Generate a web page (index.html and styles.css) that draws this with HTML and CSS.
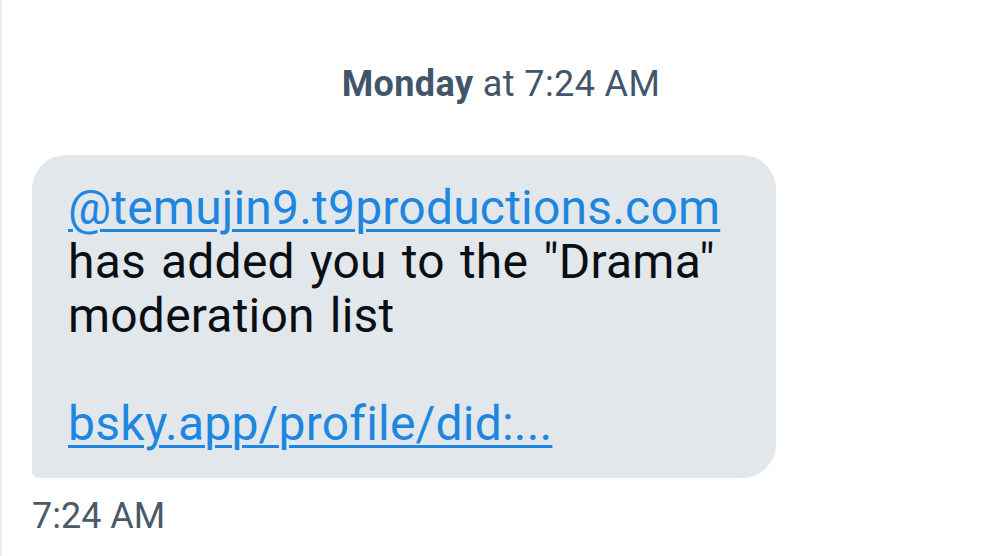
FILE: index.html
```html
<!DOCTYPE html>
<html>
<head>
<meta charset="utf-8">
<link rel="stylesheet" href="styles.css">
</head>
<body>
<div class="page">
  <div class="date"><span class="day">Monday</span> at 7:24 AM</div>
  <div class="msg">
    <div class="bubble">
      <p><a href="#">@temujin9.t9productions.com</a><br>has added you to the "Drama" moderation list</p>
      <p class="gap"><a href="#">bsky.app/profile/did:...</a></p>
    </div>
    <div class="time">7:24 AM</div>
  </div>
</div>
</body>
</html>
```
FILE: styles.css
```css
html, body {
  margin: 0;
  padding: 0;
  background: #fff;
}
.page {
  width: 1000px;
  height: 556px;
  box-sizing: border-box;
  border-left: 2px solid #ececec;
  font-family: Roboto, "Liberation Sans", sans-serif;
  padding-top: 62px;
  overflow: hidden;
}
.date {
  text-align: center;
  font-size: 36px;
  letter-spacing: 0.4px;
  color: #42566b;
  line-height: 44px;
}
.day {
  font-weight: 700;
}
.msg {
  padding: 49px 0 0 30px;
}
.bubble {
  width: 744px;
  box-sizing: border-box;
  background: #e2e7ec;
  border-radius: 34px 34px 34px 6px;
  padding: 26px 36px 27px 36px;
  font-size: 48px;
  letter-spacing: 0.2px;
  word-spacing: 3px;
  line-height: 54px;
  color: #0b0f14;
}
.bubble p {
  margin: 0;
}
.bubble p.gap {
  margin-top: 54px;
}
.bubble a {
  color: #1f86e0;
  text-decoration: underline;
  text-decoration-thickness: 3px;
  text-underline-offset: 5px;
}
.time {
  margin-top: 18px;
  font-size: 36px;
  line-height: 40px;
  color: #4b5a69;
}
```
